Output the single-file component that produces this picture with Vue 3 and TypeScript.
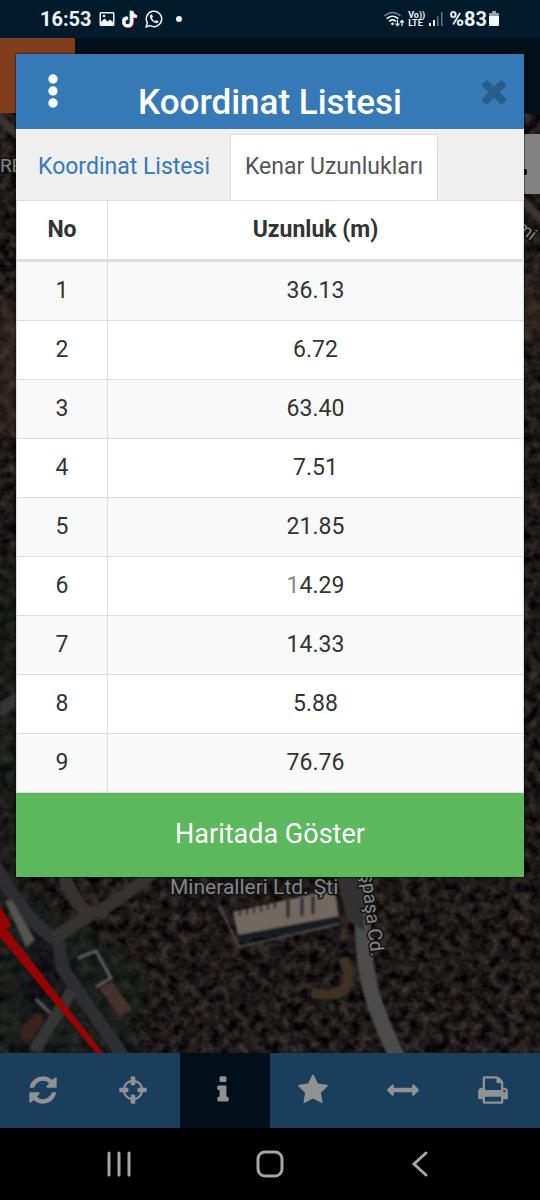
<script setup lang="ts">
import { ref } from 'vue'

interface Edge {
  no: number
  length: string
  dimmed?: boolean
}

interface Tool {
  name: string
  label: string
  path: string
}

const edges: Edge[] = [
  { no: 1, length: '36.13' },
  { no: 2, length: '6.72' },
  { no: 3, length: '63.40' },
  { no: 4, length: '7.51' },
  { no: 5, length: '21.85' },
  { no: 6, length: '14.29', dimmed: true },
  { no: 7, length: '14.33' },
  { no: 8, length: '5.88' },
  { no: 9, length: '76.76' },
]

const tabs: string[] = ['Koordinat Listesi', 'Kenar Uzunlukları']
const activeTab = ref<string>('Kenar Uzunlukları')
const activeTool = ref<string>('info')

const tools: Tool[] = [
  {
    name: 'refresh',
    label: 'Yenile',
    path: 'M1639 1056q0 5-1 7-64 268-268 434.5t-478 166.5q-146 0-282.5-55t-243.5-157l-129 129q-19 19-45 19t-45-19-19-45v-448q0-26 19-45t45-19h448q26 0 45 19t19 45-19 45l-137 137q71 66 161 102t187 36q134 0 250-65t186-179q11-17 53-117 8-23 30-23h192q13 0 22.5 9.5t9.5 22.5zm25-800v448q0 26-19 45t-45 19h-448q-26 0-45-19t-19-45 19-45l138-138q-148-137-349-137-134 0-250 65t-186 179q-11 17-53 117-8 23-30 23h-199q-13 0-22.5-9.5t-9.5-22.5v-7q65-268 270-434.5t480-166.5q146 0 284 55.5t245 156.5l130-129q19-19 45-19t45 19 19 45z',
  },
  {
    name: 'locate',
    label: 'Konum',
    path: 'M1325 1024h-109q-26 0-45-19t-19-45v-128q0-26 19-45t45-19h109q-32-108-112.5-188.5t-188.5-112.5v109q0 26-19 45t-45 19h-128q-26 0-45-19t-19-45v-109q-108 32-188.5 112.5t-112.5 188.5h109q26 0 45 19t19 45v128q0 26-19 45t-45 19h-109q32 108 112.5 188.5t188.5 112.5v-109q0-26 19-45t45-19h128q26 0 45 19t19 45v109q108-32 188.5-112.5t112.5-188.5zm339-192v128q0 26-19 45t-45 19h-143q-37 161-154.5 278.5t-278.5 154.5v143q0 26-19 45t-45 19h-128q-26 0-45-19t-19-45v-143q-161-37-278.5-154.5t-154.5-278.5h-143q-26 0-45-19t-19-45v-128q0-26 19-45t45-19h143q37-161 154.5-278.5t278.5-154.5v-143q0-26 19-45t45-19h128q26 0 45 19t19 45v143q161 37 278.5 154.5t154.5 278.5h143q26 0 45 19t19 45z',
  },
  {
    name: 'info',
    label: 'Bilgi',
    path: 'M1216 1344v128q0 26-19 45t-45 19h-512q-26 0-45-19t-19-45v-128q0-26 19-45t45-19h64v-384h-64q-26 0-45-19t-19-45v-128q0-26 19-45t45-19h384q26 0 45 19t19 45v576h64q26 0 45 19t19 45zm-128-1152v192q0 26-19 45t-45 19h-256q-26 0-45-19t-19-45v-192q0-26 19-45t45-19h256q26 0 45 19t19 45z',
  },
  {
    name: 'favourite',
    label: 'Favoriler',
    path: 'M1728 647q0 22-26 48l-363 354 86 500q1 7 1 20 0 21-10.5 35.5t-30.5 14.5q-19 0-40-12l-449-236-449 236q-22 12-40 12-21 0-31.5-14.5t-10.5-35.5q0-6 2-20l86-500-364-354q-25-27-25-48 0-37 56-46l502-73 225-455q19-41 49-41t49 41l225 455 502 73q56 9 56 46z',
  },
  {
    name: 'measure',
    label: 'Ölçüm',
    path: 'M1792 896q0 26-19 45l-256 256q-19 19-45 19t-45-19-19-45v-128h-1024v128q0 26-19 45t-45 19-45-19l-256-256q-19-19-19-45t19-45l256-256q19-19 45-19t45 19 19 45v128h1024v-128q0-26 19-45t45-19 45 19l256 256q19 19 19 45z',
  },
  {
    name: 'print',
    label: 'Yazdır',
    path: 'M448 1536h896v-256h-896v256zm0-640h896v-384h-160q-40 0-68-28t-28-68v-160h-640v640zm1152 64q0-26-19-45t-45-19-45 19-19 45 19 45 45 19 45-19 19-45zm128 0v416q0 13-9.5 22.5t-22.5 9.5h-224v160q0 40-28 68t-68 28h-960q-40 0-68-28t-28-68v-160h-224q-13 0-22.5-9.5t-9.5-22.5v-416q0-79 56.5-135.5t135.5-56.5h64v-544q0-40 28-68t68-28h672q40 0 88 20t76 48l152 152q28 28 48 76t20 88v256h64q79 0 135.5 56.5t56.5 135.5z',
  },
]
</script>

<template>
  <div class="screen">
    <header class="status">
      <div class="status-group">
        <span class="status-text">16:53</span>
        <svg width="16" height="16" viewBox="0 0 16 16" aria-hidden="true">
          <path fill="#eef5fa" fill-rule="evenodd" d="M2 1h12q1.500 0 1.500 1.500v11q0 1.500-1.500 1.500H2Q.5 15 .5 13.500v-11Q.5 1 2 1zm0 1.500V11l3.500-3.500 3 3 2.500-2 3 2.500V2.500z" />
          <circle cx="5" cy="5" r="1.300" fill="#eef5fa" />
        </svg>
        <svg width="16" height="19" viewBox="0 0 16 19" aria-hidden="true">
          <g fill="none" stroke-width="3">
            <path stroke="#e8274f" d="M10.500 1.500v11a4 4 0 1 1-4-4M10.500 2q.5 4.500 5 5" />
            <path stroke="#35dfe4" d="M9 .5v11a4 4 0 1 1-4-4" />
            <path stroke="#fff" d="M9.800 1v11a4 4 0 1 1-4-4M9.800 1.500q.5 4.500 5 5" />
          </g>
        </svg>
        <svg width="18" height="18" viewBox="0 0 18 18" aria-hidden="true">
          <path fill="none" stroke="#eef5fa" stroke-width="1.500" d="M1.200 16.800l1.100-4.100a7.700 7.700 0 1 1 2.900 2.900z" />
          <path fill="#eef5fa" d="M6 4.500c-1 .5-1.400 1.600-1 2.900.8 2.700 3 4.900 5.800 5.700 1.300.3 2.400-.3 2.700-1.600L11.300 10l-1.200 1.200Q8 10.200 6.900 8L8 6.800 7 4.500z" />
        </svg>
        <span class="more-dot"></span>
      </div>
      <div class="status-group right">
        <svg width="20" height="16" viewBox="0 0 20 16" aria-hidden="true">
          <g fill="none" stroke="#eef5fa" stroke-width="1.600" stroke-linecap="round">
            <path stroke="#788591" d="M1 4.500q7.500-6 15 0" />
            <path d="M3.200 7.300q5.300-4.200 10.600 0M5.600 10q2.900-2.200 5.800 0" />
            <path stroke-width="1.300" d="M13.500 9.500v5M12 13l1.500 1.500L15 13M18 14.500v-5M16.500 11L18 9.500l1.500 1.500" />
          </g>
          <circle cx="8.500" cy="12.800" r="1.400" fill="#eef5fa" />
        </svg>
        <span class="volte"><span>Vo))</span><span>LTE</span></span>
        <svg width="14" height="16" viewBox="0 0 14 16" aria-hidden="true">
          <path fill="#eef5fa" d="M0 12h2v3H0zM4 9h2v6H4z" />
          <path fill="#687683" d="M8 5h1.500v10H8zM12 1h1.500v14H12z" />
        </svg>
        <span class="battery">
          <span class="status-text">%83</span>
          <svg width="12" height="16" viewBox="0 0 12 16" aria-hidden="true">
            <path fill="#98a4ad" d="M4 0h4v2h2q1 0 1 1v2H1V3q0-1 1-1h2z" />
            <path fill="#f1f6fa" d="M1 5h10v9q0 1-1 1H2q-1 0-1-1z" />
          </svg>
        </span>
      </div>
    </header>

    <main class="stage">
      <div class="backdrop">
        <div class="appbar"><div class="brand"></div></div>
        <div class="map">
          <svg class="map-art" viewBox="0 0 540 940" preserveAspectRatio="xMidYMax slice" aria-hidden="true">
            <defs>
              <filter id="ground" x="0" y="0" width="100%" height="100%" color-interpolation-filters="sRGB">
                <feTurbulence type="fractalNoise" baseFrequency="0.1" numOctaves="3" seed="7" />
                <feColorMatrix values="0.34 0.08 0 0 -0.095  0.32 0.05 0 0 -0.09  0.28 0.03 0.03 0 -0.075  0 0 0 0 1" />
                <feGaussianBlur stdDeviation="0.7" />
              </filter>
              <filter id="soft"><feGaussianBlur stdDeviation="0.8" /></filter>
              <filter id="patch"><feGaussianBlur stdDeviation="8" /></filter>
            </defs>
            <rect width="540" height="940" filter="url(#ground)" />
            <g filter="url(#patch)" opacity="0.55">
              <path fill="#14201a" d="M0 440h20v330L150 860l-20 80H0z" />
              <path fill="#080b14" d="M40 815l28 35-30 60-20-35z" />
              <path fill="#49372b" d="M0 190h22v130H0zM520 170h20v55h-20z" />
            </g>
            <g filter="url(#soft)">
              <path fill="none" stroke="#3a3532" stroke-width="8" d="M-5 0l24 24M520 85l25 25" />
              <path fill="none" stroke="#0d0c0c" stroke-width="3" d="M0 155h18M0 324q10 0 18 9" />
              <path fill="#343538" d="M0 590l18-12v14L0 604z" />
              <path fill="none" stroke="#2d2e31" stroke-width="13" d="M-4 752q25 52 62 77l5 27 64 93" />
              <path fill="none" stroke="#343332" stroke-width="13" d="M62 755q16 48 32 44t58-39M94 799l-40 26" />
              <path fill="none" stroke="#343534" stroke-width="12" d="M72 878l-38 60" />
              <path fill="none" stroke="#4c4c4b" stroke-width="16" d="M363 760q-2 70 5 105t30 80" />
              <path fill="#303032" d="M337 763h27v55l-18-12z" />
              <path fill="#55524e" d="M5 788l7-1 23 40-9 7z" />
              <path fill="#716861" d="M233 799l102-23 4 30-101 17z" />
              <path fill="#161b24" d="M237 822l102-19v9l-98 16z" />
              <path fill="none" stroke="#484b4c" stroke-width="2" d="M219 792l20 42 100-23" />
              <path fill="none" stroke="#1d2029" stroke-width="3" d="M288 787v18M302 785v18M313 783v18" />
              <path fill="none" stroke="#171614" stroke-width="2" d="M240 797v6M247 796v6M254 794v6M261 793v6M268 791v6M275 790v6" />
              <path fill="none" stroke="#5b5d60" stroke-width="3" d="M78 845l18-7 15 27-15 9M36 886l14 14" />
              <path fill="#44332d" d="M99 875l13-6 20 27-12 8z" />
              <path fill="#3b211f" d="M23 912l14-12 8 6-16 23-9-4z" />
              <path fill="none" stroke="#3f3224" stroke-width="10" d="M312 880q32 6 35-10t-4-24" />
            </g>
            <path fill="#930402" d="M-1 791l13 22-6 2 97 125h-7L-1 823z" />
            <g class="map-label">
              <text x="170" y="781">Mineralleri Ltd. Şti</text>
              <text class="small" x="0" y="59">RE</text>
              <text class="small" transform="translate(361 761) rotate(83)">şpaşa Cd.</text>
              <text class="tiny" transform="translate(516 116) rotate(38)">mi</text>
            </g>
            <rect x="515" y="21" width="25" height="60" fill="#828282" />
            <rect x="517" y="56" width="10" height="6" rx="2" fill="#050505" />
          </svg>
        </div>
      </div>

      <section class="dialog" role="dialog" aria-labelledby="dialog-title">
        <div class="dialog-head">
          <button class="icon-button" type="button" aria-label="Menü">
            <svg width="10" height="34" viewBox="0 0 10 34" fill="#f5fbff" aria-hidden="true">
              <circle cx="5" cy="5" r="4.700" /><circle cx="5" cy="17" r="4.700" /><circle cx="5" cy="29" r="4.700" />
            </svg>
          </button>
          <h1 id="dialog-title">Koordinat Listesi</h1>
          <button class="icon-button close" type="button" aria-label="Kapat">
            <svg width="36" height="36" viewBox="0 0 1792 1792" aria-hidden="true">
              <path d="M1490 1322q0 40-28 68l-136 136q-28 28-68 28t-68-28l-294-294-294 294q-28 28-68 28t-68-28l-136-136q-28-28-28-68t28-68l294-294-294-294q-28-28-28-68t28-68l136-136q28-28 68-28t68 28l294 294 294-294q28-28 68-28t68 28l136 136q28 28 28 68t-28 68l-294 294 294 294q28 28 28 68z" />
            </svg>
          </button>
        </div>
        <div class="tabs" role="tablist">
          <button
            v-for="tab in tabs"
            :key="tab"
            type="button"
            role="tab"
            class="tab"
            :class="{ active: tab === activeTab }"
            :aria-selected="tab === activeTab"
            @click="activeTab = tab"
          >{{ tab }}</button>
        </div>
        <table class="edges">
          <thead>
            <tr><th scope="col" class="no">No</th><th scope="col">Uzunluk (m)</th></tr>
          </thead>
          <tbody>
            <tr v-for="edge in edges" :key="edge.no">
              <td>{{ edge.no }}</td>
              <td v-if="edge.dimmed"><span class="dim">{{ edge.length.slice(0, 1) }}</span>{{ edge.length.slice(1) }}</td>
              <td v-else>{{ edge.length }}</td>
            </tr>
          </tbody>
        </table>
        <button class="show" type="button">Haritada Göster</button>
      </section>
    </main>

    <nav class="toolbar">
      <button
        v-for="tool in tools"
        :key="tool.name"
        type="button"
        class="tool"
        :class="{ active: tool.name === activeTool }"
        :aria-label="tool.label"
        @click="activeTool = tool.name"
      >
        <svg width="32" height="32" viewBox="0 0 1792 1792" fill="#8f9193" aria-hidden="true"><path :d="tool.path" /></svg>
      </button>
    </nav>

    <footer class="system-nav">
      <button type="button" aria-label="Son uygulamalar">
        <svg width="28" height="28" viewBox="0 0 28 28" aria-hidden="true"><path d="M4 3v22M14 3v22M24 3v22" /></svg>
      </button>
      <button type="button" aria-label="Ana ekran">
        <svg width="28" height="28" viewBox="0 0 28 28" aria-hidden="true"><rect x="2" y="2" width="24" height="24" rx="7" /></svg>
      </button>
      <button type="button" aria-label="Geri">
        <svg width="28" height="28" viewBox="0 0 28 28" aria-hidden="true"><path d="M19 3L7 14l12 11" /></svg>
      </button>
    </footer>
  </div>
</template>

<style>
body {
  margin: 0;
  background: #000;
}
</style>

<style scoped>
.screen {
  display: flex;
  flex-direction: column;
  min-height: 100vh;
  font-family: Roboto, "Liberation Sans", sans-serif;
  color: #333;
}

button {
  margin: 0;
  padding: 0;
  border: 0;
  background: none;
  font: inherit;
  color: inherit;
  cursor: pointer;
}

svg {
  display: block;
}

.status {
  display: flex;
  align-items: center;
  justify-content: space-between;
  height: 38px;
  padding: 0 40px;
  background: #011a2c;
  color: #eef6fc;
}

.status-group {
  display: flex;
  align-items: center;
  gap: 7px;
}

.status-text {
  font-size: 20px;
  font-weight: 700;
  line-height: 24px;
}

.more-dot {
  width: 6px;
  height: 6px;
  margin-left: 6px;
  border-radius: 50%;
  background: #eef6fc;
}

.right {
  gap: 4px;
}

.volte {
  display: flex;
  flex-direction: column;
  font-size: 9px;
  font-weight: 700;
  line-height: 8px;
}

.battery {
  display: flex;
  align-items: center;
  gap: 1px;
  margin-left: 2px;
}

.stage {
  display: grid;
  flex: 1;
}

.backdrop {
  display: flex;
  flex-direction: column;
  grid-area: 1 / 1;
}

.appbar {
  height: 75px;
  background: #010f1a;
}

.brand {
  width: 75px;
  height: 75px;
  background: #813e1c;
}

.map {
  position: relative;
  flex: 1;
  overflow: hidden;
  background: #1b1817;
}

.map-art {
  position: absolute;
  inset: 0;
  width: 100%;
  height: 100%;
}

.map-label {
  fill: #858585;
  stroke: #151515;
  stroke-width: 3px;
  paint-order: stroke;
  font-size: 21px;
}

.small {
  font-size: 19px;
}

.tiny {
  font-size: 17px;
}

.dialog {
  position: relative;
  grid-area: 1 / 1;
  align-self: start;
  margin: 16px 16px 0;
  background: #fff;
  box-shadow: 0 0 2px #000;
}

.dialog-head {
  display: grid;
  grid-template-columns: 60px 1fr 60px;
  align-items: center;
  height: 75px;
  background: #357ab7;
}

.icon-button {
  display: flex;
  align-items: center;
  justify-content: center;
  height: 100%;
  padding: 0 0 2px 13px;
}

.close {
  padding: 0 0 1px;
  fill: #285c8a;
}

h1 {
  margin: 0;
  padding-top: 22px;
  font-size: 35px;
  font-weight: 500;
  line-height: 40px;
  text-align: center;
  color: #fff;
}

.tabs {
  display: flex;
  padding: 5px 0 0;
  background: #efefef;
  border-bottom: 1px solid #ddd;
}

.tab {
  height: 66px;
  padding: 0 14px 2px;
  border: 1px solid transparent;
  border-bottom: 0;
  font-size: 23px;
  color: #337ab7;
}

.tab:first-child {
  padding: 0 19px 2px 21px;
}

.tab.active {
  margin-bottom: -1px;
  border-color: #ddd;
  background: #fff;
  color: #555;
}

.edges {
  width: 100%;
  table-layout: fixed;
  border-collapse: separate;
  border-spacing: 0;
  border: 0 solid #ddd;
  border-width: 0 1px;
  font-size: 23px;
  line-height: 34px;
  text-align: center;
}

th,
td {
  padding: 12px 8px;
  border-bottom: 1px solid #ddd;
}

th {
  border-bottom-width: 3px;
  font-weight: 700;
}

.no {
  width: 74px;
}

th:first-child,
td:first-child {
  border-right: 1px solid #ddd;
}

tbody tr:nth-child(odd) {
  background: #f9f9f9;
}

.dim {
  color: #888;
}

.show {
  display: block;
  width: 100%;
  height: 84px;
  padding-bottom: 2px;
  background: #5cb85c;
  font-size: 27px;
  color: #fff;
}

.toolbar {
  display: grid;
  grid-template-columns: repeat(6, 1fr);
  height: 75px;
  background: #1b3e5d;
}

.tool {
  display: flex;
  align-items: center;
  justify-content: center;
  padding: 0 4px 2px 0;
}

.tool.active {
  background: #010f1a;
}

.system-nav {
  display: grid;
  grid-template-columns: repeat(3, 1fr);
  height: 72px;
  padding: 0 8%;
  background: #000;
}

.system-nav button {
  display: flex;
  align-items: center;
  justify-content: center;
}

.system-nav svg {
  fill: none;
  stroke: #a5a5a5;
  stroke-width: 3px;
  stroke-linecap: round;
}
</style>
